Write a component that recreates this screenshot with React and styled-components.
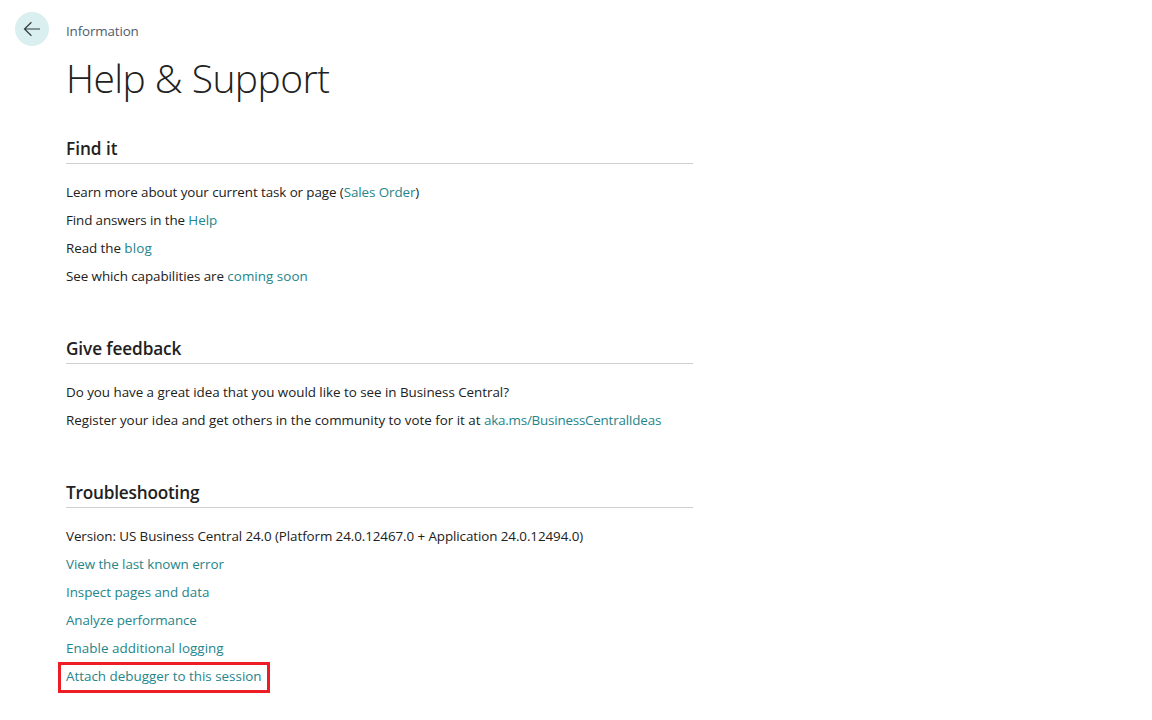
import React from "react";
import styled, { createGlobalStyle } from "styled-components";

const GlobalStyle = createGlobalStyle`
  * { box-sizing: border-box; }
  body {
    margin: 0;
    background: #ffffff;
    color: #212121;
    font-family: "Segoe UI", "Open Sans", "Noto Sans", sans-serif;
    font-size: 13.4px;
  }
`;

const Page = styled.div`
  display: grid;
  grid-template-columns: 66px 627px;
  height: 720px;
  overflow: hidden;
`;

const BackButton = styled.button`
  display: flex;
  align-items: center;
  justify-content: center;
  width: 34px;
  height: 34px;
  margin: 12px 0 0 15px;
  padding: 0;
  border: 0;
  border-radius: 50%;
  background: #daeff0;
`;

const Content = styled.main`
  padding-top: 21px;
  white-space: nowrap;
`;

const Caption = styled.div`
  height: 20px;
  line-height: 20px;
  color: #505c6d;
`;

const Title = styled.h1`
  height: 54px;
  margin: 10px 0 0;
  font-size: 39px;
  font-weight: 300;
  line-height: 54px;
`;

const Section = styled.section`
  margin-top: ${(p) => p.$gap}px;
`;

const SectionTitle = styled.h2`
  height: 30px;
  margin: 0 0 14px;
  border-bottom: 1px solid #d0d0d2;
  font-size: 17.2px;
  font-weight: 600;
  line-height: 29px;
`;

const Row = styled.div`
  display: flex;
  height: 28px;
  line-height: 28px;
`;

const Text = styled.span`
  white-space: pre;
  letter-spacing: ${(p) => p.$track || 0}px;
`;

const Link = styled(Text).attrs({ as: "a" })`
  color: #24858a;
`;

const Highlight = styled.div`
  width: 212px;
  height: 31px;
  margin: 0 0 0 -8px;
  padding-left: 5px;
  border: 3px solid #ee1c25;
  line-height: 23px;
`;

const sections = [
  {
    title: "Find it",
    gap: 29,
    rows: [
      [
        { t: "Learn more about your current task or page (", track: -0.09 },
        { t: "Sales Order", link: true, track: -0.09 },
        { t: ")" },
      ],
      [{ t: "Find answers in the ", track: -0.11 }, { t: "Help", link: true }],
      [{ t: "Read the ", track: -0.06 }, { t: "blog", link: true, track: 0.2 }],
      [{ t: "See which capabilities are ", track: -0.07 }, { t: "coming soon", link: true, track: 0.05 }],
    ],
  },
  {
    title: "Give feedback",
    track: -0.1,
    gap: 44,
    rows: [
      [{ t: "Do you have a great idea that you would like to see in Business Central?", track: -0.035 }],
      [
        { t: "Register your idea and get others in the community to vote for it at ", track: -0.015 },
        { t: "aka.ms/BusinessCentralIdeas", link: true, track: -0.21 },
      ],
    ],
  },
  {
    title: "Troubleshooting",
    track: -0.2,
    gap: 44,
    rows: [
      [
        {
          t: "Version: US Business Central 24.0 (Platform 24.0.12467.0 + Application 24.0.12494.0)",
          track: -0.085,
        },
      ],
      [{ t: "View the last known error", link: true, track: -0.07 }],
      [{ t: "Inspect pages and data", link: true, track: -0.04 }],
      [{ t: "Analyze performance", link: true, track: -0.1 }],
      [{ t: "Enable additional logging", link: true, track: 0.05 }],
    ],
  },
];

function Part({ part }) {
  const Tag = part.link ? Link : Text;
  return <Tag $track={part.track}>{part.t}</Tag>;
}

export default function App() {
  return (
    <>
      <GlobalStyle />
      <Page>
        <BackButton aria-label="Back">
          <svg width="18" height="16" viewBox="0 0 18 16" fill="none" stroke="#333b3c" strokeWidth="1.2">
            <path d="M17 8H1.6M8.4 1.2L1.5 8L8.4 14.8" />
          </svg>
        </BackButton>
        <Content>
          <Caption><Text $track={-0.15}>Information</Text></Caption>
          <Title><Text $track={-0.56}>Help &amp; Support</Text></Title>
          {sections.map((s) => (
            <Section key={s.title} $gap={s.gap}>
              <SectionTitle><Text $track={s.track}>{s.title}</Text></SectionTitle>
              {s.rows.map((row, i) => (
                <Row key={i}>
                  {row.map((part) => <Part key={part.t} part={part} />)}
                </Row>
              ))}
            </Section>
          ))}
          <Highlight><Link>Attach debugger to this session</Link></Highlight>
        </Content>
      </Page>
    </>
  );
}
